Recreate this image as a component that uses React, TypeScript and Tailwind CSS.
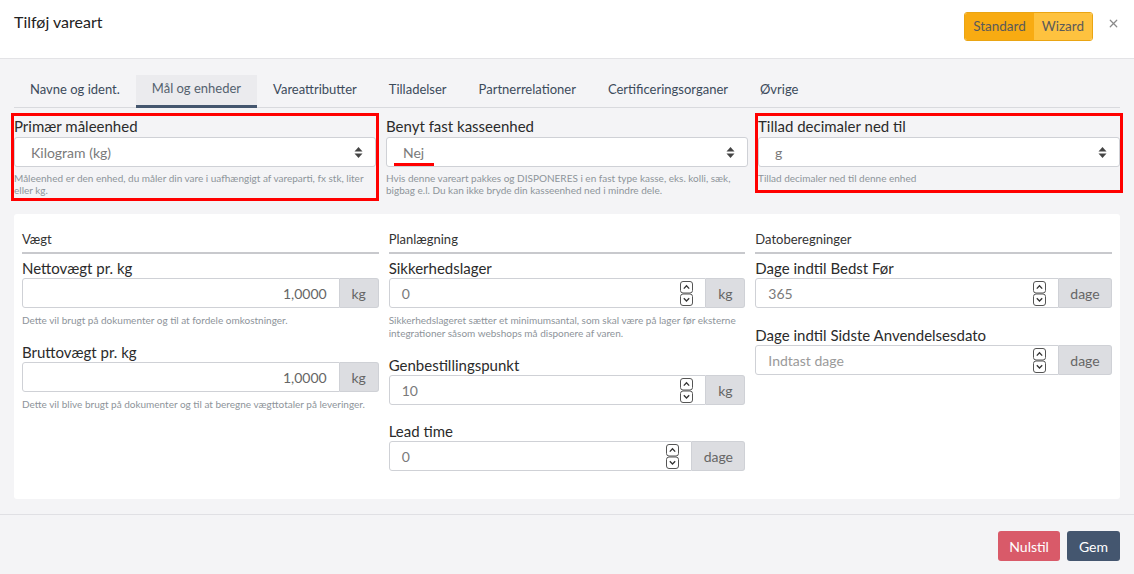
import { X } from "lucide-react";

const tabs = [
  "Navne og ident.",
  "Mål og enheder",
  "Vareattributter",
  "Tilladelser",
  "Partnerrelationer",
  "Certificeringsorganer",
  "Øvrige",
];

function SelectArrows() {
  return (
    <svg width="9" height="13" viewBox="0 0 9 13" className="shrink-0">
      <path d="M4.5 1 L8.5 5.5 H0.5 Z" fill="#444" />
      <path d="M4.5 12 L8.5 7.5 H0.5 Z" fill="#444" />
    </svg>
  );
}

function Spinner() {
  return (
    <svg width="13" height="25" viewBox="0 0 13 25" className="shrink-0">
      <rect x="0.5" y="0.5" width="12" height="11.5" rx="2.5" fill="#fff" stroke="#555" />
      <rect x="0.5" y="13" width="12" height="11.5" rx="2.5" fill="#fff" stroke="#555" />
      <path d="M3.8 7.6 L6.5 4.8 L9.2 7.6" fill="none" stroke="#333" strokeWidth="1.3" />
      <path d="M3.8 17.2 L6.5 20 L9.2 17.2" fill="none" stroke="#333" strokeWidth="1.3" />
    </svg>
  );
}

function SelectField({
  label,
  value,
  help,
  marked,
  underline,
  pad,
}: {
  label: string;
  value: string;
  help: string;
  marked?: boolean;
  underline?: boolean;
  pad: string;
}) {
  return (
    <div className={`${pad} ${marked ? "outline-[3px] outline-[#ff0000]" : ""}`}>
      <label className="block text-[15px] leading-5 text-[#2b2b2b]">{label}</label>
      <div className="relative mt-px h-[30px] bg-white border border-[#cfd1d6] rounded-[3px] flex items-center pl-4 pr-3">
        <span className="flex-1 text-[14px] text-[#7a7a7a]">{value}</span>
        <SelectArrows />
        {underline && <div className="absolute left-[7px] top-[25px] w-[40px] h-[3px] bg-[#ff0000]" />}
      </div>
      <p className="mt-[5px] text-[10px] leading-[12px] text-[#8e949a]">{help}</p>
    </div>
  );
}

function NumberField({
  label,
  value,
  placeholder,
  unit,
  help,
  spinner,
  right,
  gap = "mb-[15px]",
}: {
  label: string;
  value?: string;
  placeholder?: string;
  unit: string;
  help?: string;
  spinner?: boolean;
  right?: boolean;
  gap?: string;
}) {
  return (
    <div className={gap}>
      <label className="block text-[15px] leading-5 text-[#2b2b2b]">{label}</label>
      <div className="flex h-[30px]">
        <div className="flex-1 flex items-center bg-white border border-[#cfd1d6] rounded-l-[3px] pl-3 pr-3">
          <span
            className={`flex-1 text-[14px] ${right ? "text-right text-[#666]" : "text-[#7a7a7a]"} ${
              placeholder ? "text-[#9a9a9a]" : ""
            }`}
          >
            {value ?? placeholder}
          </span>
          {spinner && (
            <div className="ml-2">
              <Spinner />
            </div>
          )}
        </div>
        <div
          className={`flex items-center justify-center bg-[#dcdde1] border border-l-0 border-[#cfd1d6] rounded-r-[3px] text-[14px] text-[#666] ${
            unit === "kg" ? "w-[39px]" : "w-[53px]"
          }`}
        >
          {unit}
        </div>
      </div>
      {help && <p className="mt-[6px] text-[10px] leading-[13px] text-[#8e949a]">{help}</p>}
    </div>
  );
}

function Section({ title, children }: { title: string; children: React.ReactNode }) {
  return (
    <div>
      <div className="text-[13px] leading-[18px] text-[#333] pb-[4px] border-b-2 border-[#c8c9cd] mb-[4px]">
        {title}
      </div>
      {children}
    </div>
  );
}

export default function App() {
  return (
    <div className="w-[1134px] h-[574px] flex flex-col bg-[#f4f4f6] overflow-hidden" style={{ fontFamily: "Lato, 'Open Sans', sans-serif" }}>
      {/* Header */}
      <div className="h-[59px] shrink-0 bg-white border-b border-[#e3e3e6] flex items-start justify-between pl-[14px] pr-[14px] pt-3">
        <h1 className="text-[16px] leading-5 text-[#222]">Tilføj vareart</h1>
        <div className="flex items-start gap-[14px]">
          <div className="flex h-[29px] rounded-[3px] border border-[#eaa513] overflow-hidden text-[13.5px] text-[#5a5a5a]">
            <button className="px-[8px] bg-[#f8ab12]">Standard</button>
            <button className="px-[8px] bg-[#fec23f]">Wizard</button>
          </div>
          <X size={13} strokeWidth={2.2} className="mt-[5px] text-[#8a8a8a]" />
        </div>
      </div>

      {/* Body */}
      <div className="flex-1 px-[14px] pt-4">
        <div className="flex border-b border-[#d9dade] h-[33px]">
          {tabs.map((t, i) => (
            <div
              key={t}
              className={`px-4 h-[33px] flex items-center pb-[3px] text-[13px] ${
                i === 1
                  ? "bg-[#ebebee] border-b-[3px] border-[#44566e] text-[#55626f] pb-0 -mb-px"
                  : "text-[#3c4b5b]"
              }`}
            >
              {t}
            </div>
          ))}
        </div>

        <div className="grid grid-cols-3 gap-[10px] mt-[8px] items-start">
          <SelectField
            label="Primær måleenhed"
            value="Kilogram (kg)"
            help="Måleenhed er den enhed, du måler din vare i uafhængigt af vareparti, fx stk, liter eller kg."
            marked
            pad="pb-[2px]"
          />
          <SelectField
            label="Benyt fast kasseenhed"
            value="Nej"
            help="Hvis denne vareart pakkes og DISPONERES i en fast type kasse, eks. kolli, sæk, bigbag e.l. Du kan ikke bryde din kasseenhed ned i mindre dele."
            underline
            pad="pb-[2px]"
          />
          <SelectField
            label="Tillad decimaler ned til"
            value="g"
            help="Tillad decimaler ned til denne enhed"
            marked
            pad="pb-[6px]"
          />
        </div>

        <div className="mt-[16px] bg-white rounded-[3px] px-2 pt-4 pb-[13px] grid grid-cols-3 gap-[10px]">
          <Section title="Vægt">
            <NumberField
              label="Nettovægt pr. kg"
              value="1,0000"
              unit="kg"
              right
              help="Dette vil brugt på dokumenter og til at fordele omkostninger."
            />
            <NumberField
              label="Bruttovægt pr. kg"
              value="1,0000"
              unit="kg"
              right
              help="Dette vil blive brugt på dokumenter og til at beregne vægttotaler på leveringer."
            />
          </Section>
          <Section title="Planlægning">
            <NumberField
              label="Sikkerhedslager"
              value="0"
              unit="kg"
              spinner
              help="Sikkerhedslageret sætter et minimumsantal, som skal være på lager før eksterne integrationer såsom webshops må disponere af varen."
            />
            <NumberField label="Genbestillingspunkt" value="10" unit="kg" spinner gap="mb-[16px]" />
            <NumberField label="Lead time" value="0" unit="dage" spinner gap="mb-[15px]" />
          </Section>
          <Section title="Datoberegninger">
            <NumberField label="Dage indtil Bedst Før" value="365" unit="dage" spinner gap="mb-[17px]" />
            <NumberField label="Dage indtil Sidste Anvendelsesdato" placeholder="Indtast dage" unit="dage" spinner />
          </Section>
        </div>
      </div>

      {/* Footer */}
      <div className="h-[60px] shrink-0 border-t border-[#e0e0e4] flex items-start justify-end gap-[7px] px-[14px] pt-4">
        <button className="h-[30px] px-[11px] rounded-[3px] bg-[#d95a69] text-white text-[14px]">Nulstil</button>
        <button className="h-[30px] px-[12px] rounded-[3px] bg-[#44566f] text-white text-[14px]">Gem</button>
      </div>
    </div>
  );
}
